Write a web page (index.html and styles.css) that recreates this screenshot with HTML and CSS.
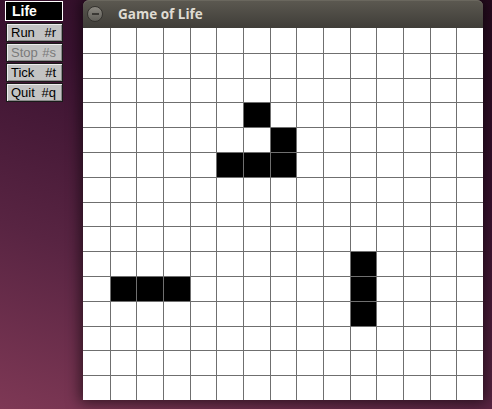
FILE: index.html
```html
<!DOCTYPE html>
<html lang="en">

<head>
    <meta charset="UTF-8">
    <meta name="viewport" content="width=device-width, initial-scale=1.0">
    <title>Game of Life</title>
    <link rel="stylesheet" href="styles.css">
</head>

<body>
    <div class="menu">
        <div class="menu-title">Life</div>
        <div class="menu-item"><span>Run</span><span>#r</span></div>
        <div class="menu-item disabled"><span>Stop</span><span>#s</span></div>
        <div class="menu-item"><span>Tick</span><span>#t</span></div>
        <div class="menu-item"><span>Quit</span><span>#q</span></div>
    </div>
    <div class="window">
        <div class="titlebar">
            <div class="min-btn"><span></span></div>
            <span class="title">Game of Life</span>
        </div>
        <div class="board" id="board"></div>
    </div>
    <script>
        const board = document.getElementById('board')
        const SIZE = 15
        // row, col
        const alive = [
            [3, 6], [4, 7], [5, 5], [5, 6], [5, 7],
            [10, 1], [10, 2], [10, 3],
            [9, 10], [10, 10], [11, 10]
        ]

        for (let r = 0; r < SIZE; r++) {
            for (let c = 0; c < SIZE; c++) {
                const cell = document.createElement('div')
                cell.className = 'cell'
                if (alive.some(a => a[0] === r && a[1] === c)) {
                    cell.className = 'cell live'
                }
                board.appendChild(cell)
            }
        }
    </script>
</body>

</html>
```

FILE: styles.css
```css
html,
body {
    margin: 0;
    padding: 0;
}

body {
    width: 492px;
    height: 409px;
    overflow: hidden;
    display: flex;
    align-items: flex-start;
    background: linear-gradient(200deg, #260b1f 0%, #3a1230 35%, #582442 68%, #7e3855 100%);
    font-family: "Liberation Sans", Arial, sans-serif;
}

.menu {
    width: 78px;
    padding: 1px 0 0 5px;
    display: flex;
    flex-direction: column;
    gap: 1px;
}

.menu-title {
    width: 56px;
    height: 18px;
    border: 1px solid #fff;
    background: #000;
    color: #fff;
    font-weight: bold;
    font-size: 14px;
    line-height: 18px;
    text-indent: 6px;
    margin-bottom: 1px;
}

.menu-item {
    width: 45px;
    height: 17px;
    border: 1px solid #1a1a1a;
    background: #c3c3c3;
    box-shadow: inset 1px 1px 0 #eee, inset -1px -1px 0 #8a8a8a;
    display: flex;
    justify-content: space-between;
    align-items: center;
    font-size: 13px;
    color: #000;
    padding: 0 6px 0 4px;
    margin-left: 1px;
}

.menu-item.disabled {
    color: #7a7a7a;
}

.window {
    width: 400px;
    box-shadow: 0 0 14px 3px rgba(0, 0, 0, 0.55);
    border-radius: 6px 6px 0 0;
}

.titlebar {
    height: 28px;
    border-radius: 6px 6px 0 0;
    background: linear-gradient(#5c5951, #3f3d38);
    box-shadow: inset 0 1px 0 #6a675e;
    display: flex;
    align-items: center;
    padding-left: 4px;
}

.min-btn {
    width: 16px;
    height: 16px;
    border-radius: 50%;
    background: linear-gradient(#8a8780, #5f5d57);
    border: 1px solid #34322e;
    box-sizing: border-box;
    display: flex;
    align-items: center;
    justify-content: center;
}

.min-btn span {
    width: 7px;
    height: 2px;
    background: #3a3834;
}

.title {
    margin-left: 15px;
    color: #dfdbd2;
    font-family: "Open Sans", "DejaVu Sans", sans-serif;
    font-weight: bold;
    font-size: 13.5px;
}

.board {
    height: 372px;
    background: #fff;
    display: grid;
    grid-template-columns: repeat(15, 1fr);
    grid-template-rows: repeat(15, 1fr);
}

.cell {
    border-left: 1px solid #6f6f6f;
    border-top: 1px solid #6f6f6f;
}

.cell:nth-child(15n+1) {
    border-left: none;
}

.cell:nth-child(-n+15) {
    border-top: none;
}

.cell.live {
    background: #000;
}
```
